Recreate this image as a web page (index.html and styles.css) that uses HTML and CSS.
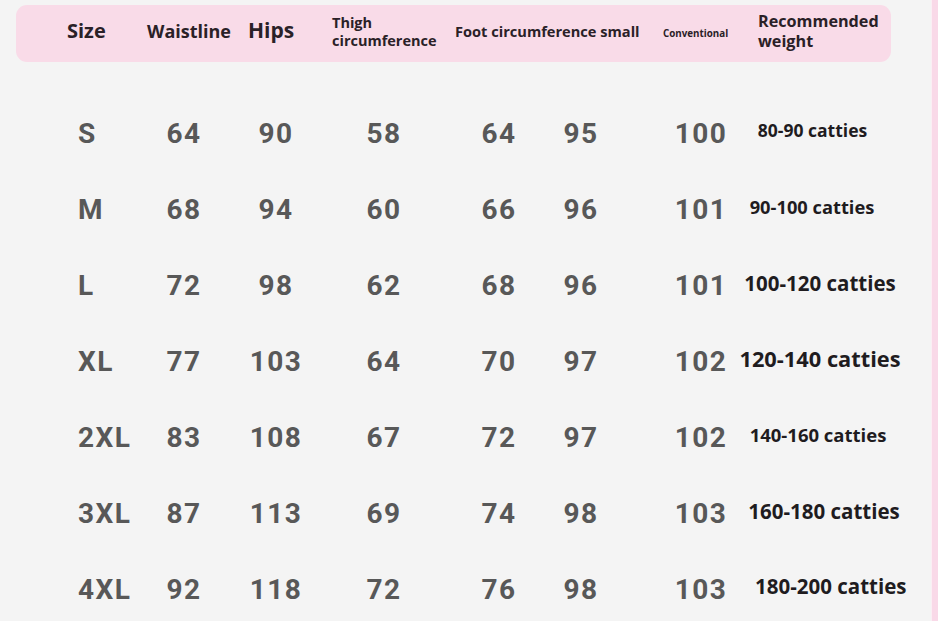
FILE: index.html
```html
<!DOCTYPE html>
<html lang="en">
<head>
<meta charset="utf-8">
<title>Size chart</title>
<link rel="stylesheet" href="styles.css">
</head>
<body>
<div class="page">
  <main class="chart">
    <div class="head">
      <div class="h h-size">Size</div>
      <div class="h h-waist">Waistline</div>
      <div class="h h-hips">Hips</div>
      <div class="h h-thigh">Thigh<br>circumference</div>
      <div class="h h-foot">Foot circumference small</div>
      <div class="h h-conv">Conventional</div>
      <div class="h h-weight">Recommended<br>weight</div>
    </div>
    <div class="rows">
      <div class="row"><span class="c size">S</span><span class="c waist">64</span><span class="c hips">90</span><span class="c thigh">58</span><span class="c foot">64</span><span class="c small">95</span><span class="c conv">100</span><span class="weight w1">80-90 catties</span></div>
      <div class="row"><span class="c size">M</span><span class="c waist">68</span><span class="c hips">94</span><span class="c thigh">60</span><span class="c foot">66</span><span class="c small">96</span><span class="c conv">101</span><span class="weight w2">90-100 catties</span></div>
      <div class="row"><span class="c size">L</span><span class="c waist">72</span><span class="c hips">98</span><span class="c thigh">62</span><span class="c foot">68</span><span class="c small">96</span><span class="c conv">101</span><span class="weight w3">100-120 catties</span></div>
      <div class="row"><span class="c size">XL</span><span class="c waist">77</span><span class="c hips">103</span><span class="c thigh">64</span><span class="c foot">70</span><span class="c small">97</span><span class="c conv">102</span><span class="weight w4">120-140 catties</span></div>
      <div class="row"><span class="c size">2XL</span><span class="c waist">83</span><span class="c hips">108</span><span class="c thigh">67</span><span class="c foot">72</span><span class="c small">97</span><span class="c conv">102</span><span class="weight w5">140-160 catties</span></div>
      <div class="row"><span class="c size">3XL</span><span class="c waist">87</span><span class="c hips">113</span><span class="c thigh">69</span><span class="c foot">74</span><span class="c small">98</span><span class="c conv">103</span><span class="weight w6">160-180 catties</span></div>
      <div class="row"><span class="c size">4XL</span><span class="c waist">92</span><span class="c hips">118</span><span class="c thigh">72</span><span class="c foot">76</span><span class="c small">98</span><span class="c conv">103</span><span class="weight w7">180-200 catties</span></div>
    </div>
  </main>
  <div class="strip"></div>
</div>
</body>
</html>
```

FILE: styles.css
```css
html, body {
  margin: 0;
  padding: 0;
}
body {
  background: #f4f4f4;
  width: 938px;
  height: 621px;
  overflow: hidden;
}
.page {
  display: flex;
  height: 621px;
}
.chart {
  flex: 1;
  padding-top: 5px;
}
.strip {
  width: 6px;
  background: #f9d9e8;
  border-left: 1px solid #fbeef4;
}

/* header band */
.head {
  margin-left: 16px;
  width: 875px;
  height: 57px;
  box-sizing: border-box;
  background: #f9dbe8;
  border-radius: 11px;
  display: flex;
  align-items: center;
  padding: 0 0 6px 51px;
  font-family: "Open Sans", "Noto Sans", sans-serif;
  font-weight: 700;
  color: #2a2127;
}
.h { line-height: 1; }
.h-size { width: 80px; font-size: 20px; }
.h-waist { width: 101px; font-size: 18px; }
.h-hips { width: 84px; font-size: 21px; }
.h-thigh { width: 123px; font-size: 14.5px; line-height: 18px; padding-top: 3px; }
.h-foot { width: 208px; font-size: 14.6px; padding-top: 2px; }
.h-conv { width: 95px; font-size: 9.8px; padding-top: 7px; }
.h-weight { font-size: 16.2px; line-height: 19.5px; padding-top: 2px; }

/* body rows */
.rows {
  margin-top: 33px;
}
.row {
  display: flex;
  align-items: center;
  height: 76px;
}
.c {
  font-family: Roboto, "Noto Sans", sans-serif;
  font-weight: 700;
  font-size: 28px;
  letter-spacing: 1.5px;
  color: #585858;
  text-align: center;
}
.size { margin-left: 78px; width: 76px; text-align: left; }
.waist { width: 60px; }
.hips { margin-left: 22px; width: 80px; }
.thigh { margin-left: 28px; width: 80px; }
.foot { margin-left: 35px; width: 80px; }
.small { margin-left: 12px; width: 60px; }
.conv { margin-left: 60px; width: 60px; }
.weight {
  box-sizing: border-box;
  margin-left: 4px;
  width: 170px;
  text-align: center;
  font-family: "Open Sans", "Noto Sans", sans-serif;
  font-weight: 700;
  color: #1f1c1f;
  white-space: nowrap;
}
.w1 { font-size: 17.5px; padding-right: 15px; margin-top: -6px; }
.w2 { font-size: 18.3px; padding-right: 16px; margin-top: -6px; }
.w3 { font-size: 20.5px; margin-top: -4px; }
.w4 { font-size: 21.8px; margin-top: -6px; }
.w5 { font-size: 18.5px; padding-right: 4px; margin-top: -6px; }
.w6 { font-size: 20.5px; padding-left: 8px; margin-top: -4px; }
.w7 { font-size: 20.5px; padding-left: 20px; margin-top: -6px; }
```
